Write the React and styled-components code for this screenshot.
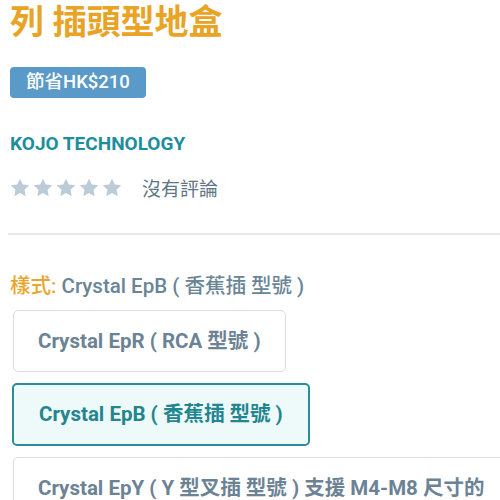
import React from 'react';
import styled, { createGlobalStyle } from 'styled-components';

const Global = createGlobalStyle`
  html, body { margin: 0; padding: 0; background: #fff; }
  body { font-family: Roboto, "Noto Sans CJK TC", sans-serif; overflow: hidden; }
`;

const Page = styled.div`
  width: 500px;
  height: 500px;
  overflow: hidden;
  padding: 0 0 0 10px;
  box-sizing: border-box;
`;

const Title = styled.h1`
  margin: 0;
  padding-top: 2px;
  font-size: 34px;
  line-height: 40px;
  font-weight: 700;
  color: #e9a325;
  white-space: nowrap;
`;

const Badge = styled.span`
  display: inline-block;
  margin-top: 25px;
  background: #5a9ac8;
  color: #fff;
  font-size: 18.5px;
  font-weight: 500;
  line-height: 31px;
  height: 31px;
  padding: 0 16px;
  border-radius: 4px;
`;

const Brand = styled.div`
  margin-top: 34px;
  font-size: 19px;
  font-weight: 700;
  color: #1e8e9c;
  line-height: 24px;
`;

const RatingRow = styled.div`
  display: flex;
  align-items: center;
  margin-top: 18px;
  height: 26px;
`;

const Stars = styled.div`
  display: flex;
  gap: 3px;
  margin-right: 20px;
`;

const NoReview = styled.span`
  font-size: 19px;
  color: #627584;
`;

const Divider = styled.hr`
  margin: 33px 0 0 -2px;
  border: none;
  border-top: 2px solid #e6e6e6;
`;

const StyleLabel = styled.div`
  margin-top: 37px;
  font-size: 20.5px;
  font-weight: 500;
  line-height: 28px;
  color: #6a8596;
  white-space: nowrap;
  span { color: #eaa52c; }
`;

const Options = styled.div`
  display: flex;
  flex-direction: column;
  align-items: flex-start;
  gap: 11px;
  margin: 10px 0 0 3px;
`;

const Option = styled.div`
  box-sizing: border-box;
  height: ${p => (p.$active ? 63 : 62)}px;
  display: flex;
  align-items: center;
  padding: 0 ${p => (p.$active ? 25 : 24)}px;
  margin-left: ${p => (p.$active ? -1 : 0)}px;
  border: ${p => (p.$active ? '2px solid #2b8e97' : '1.5px solid #dcdcdc')};
  background: ${p => (p.$active ? '#eef9f9' : '#fff')};
  border-radius: 5px;
  font-size: 20.5px;
  line-height: 21px;
  font-weight: 700;
  color: ${p => (p.$active ? '#23858f' : '#6c8395')};
  white-space: nowrap;
  ${p => p.$wide && 'width: 520px;'}
`;

const Star = () => (
  <svg width="20" height="19" viewBox="0 0 24 23">
    <path
      d="M12 0.8l3.4 7.1 7.8 1-5.7 5.4 1.4 7.7L12 18.3l-6.9 3.7 1.4-7.7L0.8 8.9l7.8-1z"
      fill="#bccbd8"
    />
  </svg>
);

export default function App() {
  return (
    <Page>
      <Global />
      <Title>列 插頭型地盒</Title>
      <Badge>節省HK$210</Badge>
      <Brand>KOJO TECHNOLOGY</Brand>
      <RatingRow>
        <Stars>
          {[0, 1, 2, 3, 4].map(i => <Star key={i} />)}
        </Stars>
        <NoReview>沒有評論</NoReview>
      </RatingRow>
      <Divider />
      <StyleLabel><span>樣式:</span> Crystal EpB ( 香蕉插 型號 )</StyleLabel>
      <Options>
        <Option>Crystal EpR ( RCA 型號 )</Option>
        <Option $active>Crystal EpB ( 香蕉插 型號 )</Option>
        <Option $wide>Crystal EpY ( Y 型叉插 型號 ) 支援 M4-M8 尺寸的</Option>
      </Options>
    </Page>
  );
}
